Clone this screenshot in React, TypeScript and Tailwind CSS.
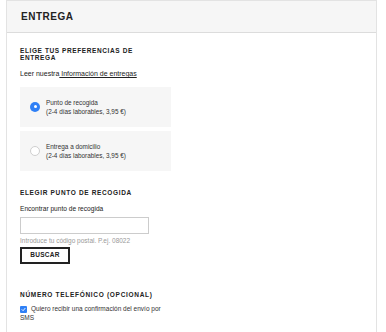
import React from 'react';

const font = { fontFamily: '"Liberation Sans", Arial, sans-serif' };

const Radio: React.FC<{ checked?: boolean }> = ({ checked }) =>
  checked ? (
    <span className="w-[10px] h-[10px] rounded-full bg-[#2f80f6] flex items-center justify-center shrink-0">
      <span className="w-[3px] h-[3px] rounded-full bg-white" />
    </span>
  ) : (
    <span className="w-[10px] h-[10px] rounded-full border border-[#cfcfcf] bg-white shrink-0" />
  );

const options = [
  { title: 'Punto de recogida', sub: '(2-4 días laborables, 3,95 €)', checked: true },
  { title: 'Entrega a domicilio', sub: '(2-4 días laborables, 3,95 €)', checked: false },
];

export default function App() {
  return (
    <div className="w-[386px] h-[332px] bg-white overflow-hidden text-[#222]" style={font}>
      <div className="ml-[6px] w-[371px] h-[340px] border-x border-t border-[#e3e3e3]">
        <div className="h-[32px] bg-[#f6f6f6] border-b border-[#dcdcdc] flex items-center pl-[14px]">
          <h1 className="text-[10px] font-bold tracking-[0.5px] leading-none">ENTREGA</h1>
        </div>

        <div className="pl-[13px] pt-[14px]">
          <h2 className="text-[6.5px] font-bold tracking-[0.6px] leading-[7px] w-[145px]">
            ELIGE TUS PREFERENCIAS DE ENTREGA
          </h2>
          <p className="mt-[8px] text-[7px] leading-[9px]">
            Leer nuestra<span className="underline"> Información de entregas</span>
          </p>

          <div className="mt-[8.5px] flex flex-col gap-[4px]">
            {options.map((o) => (
              <div key={o.title} className="w-[151px] h-[40px] bg-[#f6f6f6] flex items-center pl-[10px] gap-[6px]">
                <Radio checked={o.checked} />
                <div className="text-[6.4px] leading-[9px] text-[#333]">
                  <div>{o.title}</div>
                  <div>{o.sub}</div>
                </div>
              </div>
            ))}
          </div>

          <h2 className="mt-[18.5px] text-[6.5px] font-bold tracking-[0.65px] leading-[7px]">
            ELEGIR PUNTO DE RECOGIDA
          </h2>
          <p className="mt-[8px] text-[6.6px] leading-[9px]">Encontrar punto de recogida</p>
          <div className="mt-[3.5px] w-[129px] h-[17px] border border-[#cccccc] bg-white" />
          <p className="mt-[2px] text-[6.5px] leading-[9px] text-[#9a9a9a]">
            Introduce tu código postal. P.ej. 08022
          </p>
          <button className="mt-[2px] w-[50px] h-[17px] border-2 border-[#222] bg-white text-[6.5px] font-bold tracking-[0.3px] leading-none flex items-center justify-center">
            BUSCAR
          </button>

          <h2 className="mt-[27.5px] text-[6.5px] font-bold tracking-[0.7px] leading-[7px]">
            NÚMERO TELEFÓNICO (OPCIONAL)
          </h2>
          <p className="mt-[7px] w-[150px] text-[6.5px] leading-[8.5px] text-[#333]">
            <span className="inline-flex align-[-1px] mr-[4px] w-[7px] h-[7px] rounded-[1px] bg-[#2f80f6] items-center justify-center">
              <svg width="5" height="5" viewBox="0 0 10 10" fill="none">
                <path d="M2 5.2 L4.2 7.4 L8.2 2.6" stroke="white" strokeWidth="1.8" strokeLinecap="round" strokeLinejoin="round" />
              </svg>
            </span>
            Quiero recibir una confirmación del envío por SMS
          </p>
        </div>
      </div>
    </div>
  );
}
